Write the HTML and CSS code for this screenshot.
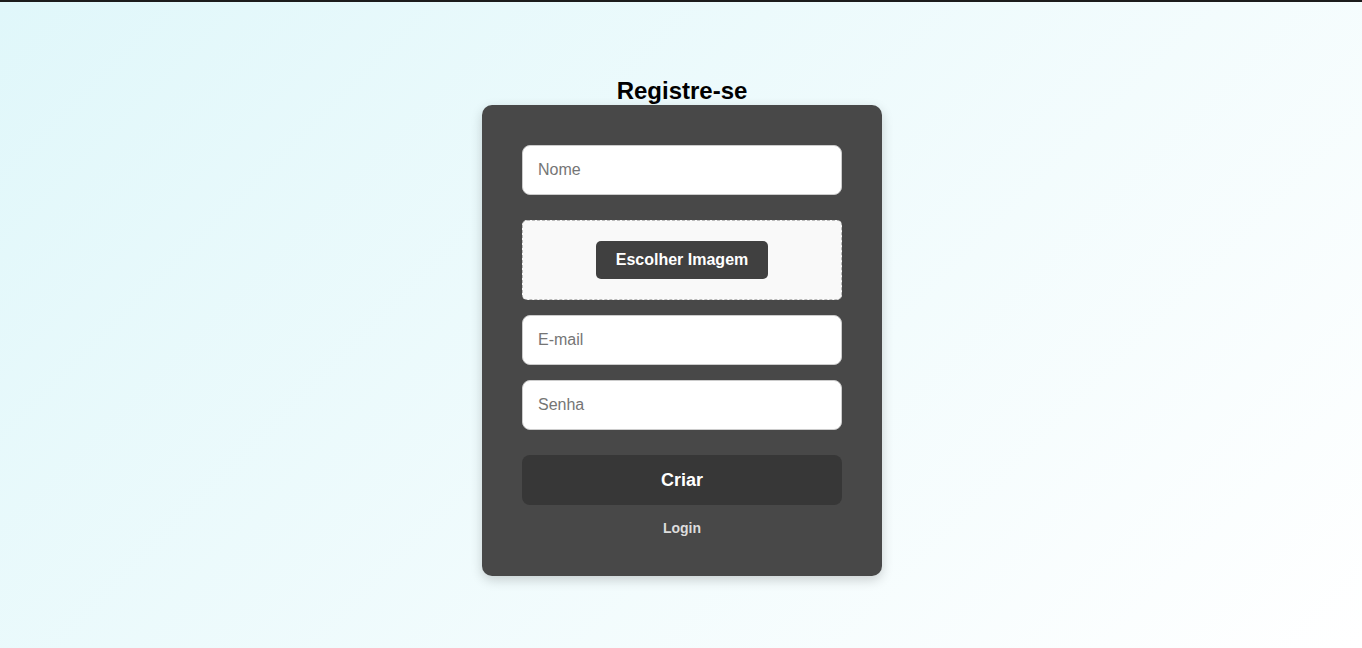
FILE: index.html
```html
<!DOCTYPE html>
<html lang="pt">
<head>
<meta charset="utf-8">
<title>Registre-se</title>
<link rel="stylesheet" href="styles.css">
</head>
<body>
<div class="topline"></div>
<main class="page">
  <h2 class="title">Registre-se</h2>
  <form class="card">
    <input class="field" type="text" placeholder="Nome">
    <div class="file-box">
      <button type="button" class="file-btn">Escolher Imagem</button>
    </div>
    <input class="field" type="email" placeholder="E-mail">
    <input class="field field-last" type="password" placeholder="Senha">
    <button type="button" class="submit">Criar</button>
    <a class="login" href="#">Login</a>
  </form>
</main>
</body>
</html>
```
FILE: styles.css
```css
html, body {
  margin: 0;
  padding: 0;
}
body {
  min-height: 648px;
  background: linear-gradient(135deg, #e0f7fa 0%, #ffffff 100%);
  font-family: "Liberation Sans", Arial, sans-serif;
}
.topline {
  height: 2px;
  background: #1c1c1c;
}
.page {
  display: flex;
  flex-direction: column;
  align-items: center;
  padding-top: 74px;
  padding-left: 2px;
}
.title {
  margin: 0;
  font-size: 24px;
  line-height: 29px;
  font-weight: bold;
  color: #000;
}
.card {
  width: 320px;
  padding: 40px 40px 40px;
  background: #484848;
  border-radius: 10px;
  box-shadow: 0 4px 12px rgba(0, 0, 0, 0.18);
  display: flex;
  flex-direction: column;
}
.field {
  box-sizing: border-box;
  width: 320px;
  height: 50px;
  padding: 0 15px;
  border: 1px solid #cccccc;
  border-radius: 8px;
  background: #fff;
  font-family: "Liberation Sans", Arial, sans-serif;
  font-size: 16px;
  color: #333;
  margin: 0 0 15px;
  outline: none;
}
.field::placeholder {
  color: #757575;
}
.field-last {
  margin-bottom: 25px;
}
.file-box {
  box-sizing: border-box;
  height: 80px;
  margin: 10px 0 15px;
  background: #f9f9f9;
  border: 1px dashed #bbbbbb;
  border-radius: 5px;
  display: flex;
  align-items: center;
  justify-content: center;
}
.file-btn {
  height: 38px;
  padding: 0 20px;
  border: none;
  border-radius: 5px;
  background: #404040;
  color: #fff;
  font-family: "Liberation Sans", Arial, sans-serif;
  font-size: 16px;
  font-weight: bold;
}
.submit {
  height: 50px;
  border: none;
  border-radius: 8px;
  background: #373737;
  color: #fff;
  font-family: "Liberation Sans", Arial, sans-serif;
  font-size: 18px;
  font-weight: bold;
}
.login {
  margin-top: 15px;
  align-self: center;
  color: #dddddd;
  font-size: 14px;
  font-weight: bold;
  line-height: 16px;
  text-decoration: none;
}
```
